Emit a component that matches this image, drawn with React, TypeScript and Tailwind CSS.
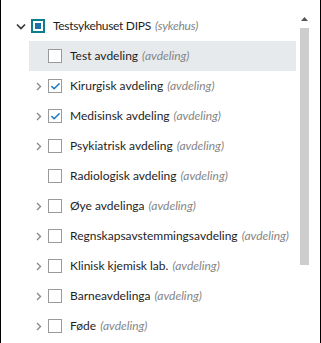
import { Check } from 'lucide-react'

type Item = { name: string; checked?: boolean; expandable?: boolean; active?: boolean }

const items: Item[] = [
    { name: 'Test avdeling', active: true },
    { name: 'Kirurgisk avdeling', checked: true, expandable: true },
    { name: 'Medisinsk avdeling', checked: true, expandable: true },
    { name: 'Psykiatrisk avdeling', expandable: true },
    { name: 'Radiologisk avdeling' },
    { name: 'Øye avdelinga', expandable: true },
    { name: 'Regnskapsavstemmingsavdeling', expandable: true },
    { name: 'Klinisk kjemisk lab.', expandable: true },
    { name: 'Barneavdelinga', expandable: true },
    { name: 'Føde', expandable: true },
]

function ChevronRight() {
    return (
        <svg width="6" height="9" viewBox="0 0 6 9" className="block">
            <path d="M1 1l3.5 3.5L1 8" fill="none" stroke="#8a8a8a" strokeWidth="1.4" />
        </svg>
    )
}

function ChevronDown() {
    return (
        <svg width="10" height="7" viewBox="0 0 10 7" className="block">
            <path d="M1 1.5l4 4 4-4" fill="none" stroke="#333" strokeWidth="1.6" />
        </svg>
    )
}

export default function App() {
    return (
        <div
            className="w-[321px] h-[343px] bg-white border-l border-r border-black flex overflow-hidden text-[12px] text-[#1e1e1e]"
            style={{ fontFamily: 'Lato, "Open Sans", sans-serif' }}
        >
            <div className="flex-1 min-w-0 pt-[11px]">
                {/* root node */}
                <div className="h-[30px] flex items-center">
                    <div className="w-[30px] flex justify-end pr-[5px]">
                        <ChevronDown />
                    </div>
                    <div className="w-[14px] h-[14px] border-2 border-[#0b7d8c] p-[2px] bg-white">
                        <div className="w-full h-full bg-[#1f6fa8]" />
                    </div>
                    <span className="ml-[8px] whitespace-nowrap tracking-[-0.3px]">Testsykehuset DIPS</span>
                    <span className="ml-[4px] italic text-[#858585] whitespace-nowrap tracking-[-0.2px]">(sykehus)</span>
                </div>

                {/* children */}
                <div className="pl-[28px]">
                    {items.map((it) => (
                        <div
                            key={it.name}
                            className={`h-[30px] flex items-center ${it.active ? 'bg-[#e6eaed]' : ''}`}
                        >
                            <div className="w-[19px] flex justify-end pr-[6px]">
                                {it.expandable && <ChevronRight />}
                            </div>
                            <div className="w-[14px] h-[14px] border border-[#9a9a9a] bg-white flex items-center justify-center">
                                {it.checked && <Check size={11} strokeWidth={3.4} color="#1a78c2" />}
                            </div>
                            <span className="ml-[8px] whitespace-nowrap">{it.name}</span>
                            <span className="ml-[4px] italic text-[#858585] whitespace-nowrap">(avdeling)</span>
                        </div>
                    ))}
                </div>
            </div>

            {/* scrollbar */}
            <div className="w-[24px] shrink-0 flex flex-col items-center pt-[17px] pr-[11px] pl-[3px]">
                <svg width="7" height="4" viewBox="0 0 7 4" className="block">
                    <path d="M0 4L3.5 0 7 4z" fill="#555" />
                </svg>
                <div className="mt-[7px] w-[9px] h-[237px] bg-[#cdcdcd]" />
            </div>
        </div>
    )
}
